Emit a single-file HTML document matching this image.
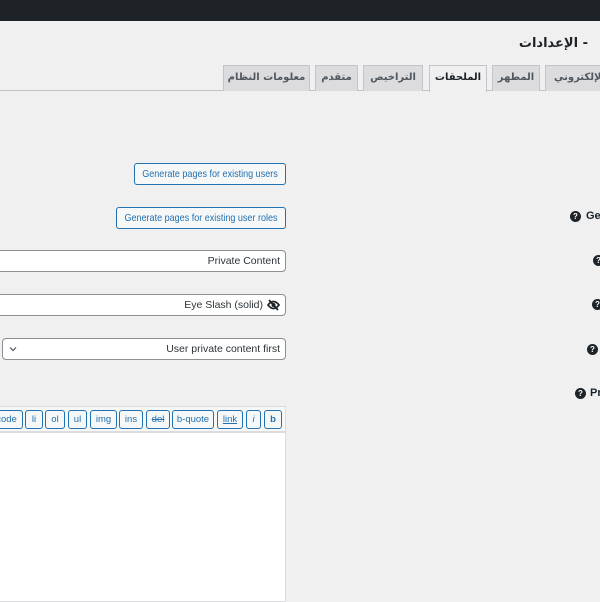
<!DOCTYPE html>
<html><head><meta charset="utf-8"><style>
*{box-sizing:border-box;margin:0;padding:0}
body{width:600px;height:600px;overflow:hidden;background:#f0f0f1;position:relative;font-family:"Liberation Sans","Noto Sans CJK SC",sans-serif;color:#1d2327;font-size:11px}
.a{position:absolute;white-space:nowrap}
.top{left:0;top:0;width:600px;height:21px;background:#1d2327}
.title{right:12px;top:36px;font-size:13px;font-weight:bold;color:#1d2327;direction:rtl;font-family:"DejaVu Sans",sans-serif}
.tab{top:65px;height:26px;border:1px solid #c3c4c7;border-bottom:none;background:#dcdcde;font-weight:bold;font-size:10px;color:#50575e;text-align:center;line-height:24px;font-family:"DejaVu Sans",sans-serif;direction:rtl;overflow:hidden}
.tab.on{background:#f0f0f1;color:#1d2327;height:27px}
.line{left:0;top:90px;width:600px;height:1px;background:#c3c4c7}
.btn{height:22px;border:1px solid #2271b1;border-radius:3px;background:#f6f7f7;color:#2271b1;font-size:10.5px;line-height:20px;overflow:hidden}
.btn span{display:block;width:240px;margin-left:calc(50% - 120px);text-align:center;transform:scaleX(0.86)}
.inp{height:22px;border:1px solid #8c8f94;border-radius:4px;background:#fff;color:#2c3338;font-size:10.5px;line-height:20px;text-align:right;padding-right:5px}
.q{width:11px;height:11px;border-radius:50%;background:#1d2327;color:#fff;font-size:8px;font-weight:bold;text-align:center;line-height:11px}
.lab{font-weight:bold;font-size:11px;color:#1d2327}
.tb{top:410px;height:19px;border:1px solid #2271b1;border-radius:3px;background:#f6f7f7;color:#2271b1;font-size:9.5px;line-height:17px;text-align:center}
</style></head><body>
<div class="a top"></div>
<div class="a title">- الإعدادات</div>
<div class="a line"></div>
<div class="a tab" style="left:223px;width:87px">معلومات النظام</div>
<div class="a tab" style="left:315px;width:43px">متقدم</div>
<div class="a tab" style="left:363px;width:60px">التراخيص</div>
<div class="a tab on" style="left:429px;width:58px">الملحقات</div>
<div class="a tab" style="left:492px;width:48px">المطهر</div>
<div class="a tab" style="left:545px;width:70px;text-align:left;padding-left:8px">الإلكتروني</div>

<div class="a btn" style="left:134px;top:163px;width:152px"><span>Generate pages for existing users</span></div>
<div class="a btn" style="left:116px;top:207px;width:170px"><span>Generate pages for existing user roles</span></div>
<div class="a inp" style="left:-5px;top:250px;width:291px">Private Content</div>
<div class="a inp" style="left:-5px;top:294px;width:291px;padding-right:22px">Eye Slash (solid)</div>
<svg class="a" style="left:267px;top:299px" width="13" height="12" viewBox="0 0 13 12"><path d="M1 6Q6.5 -1 12 6Q6.5 13 1 6Z" fill="none" stroke="#1d2327" stroke-width="1.8"/><circle cx="6.5" cy="6" r="2" fill="#1d2327"/><path d="M2 1L11 11" stroke="#1d2327" stroke-width="1.8"/></svg>
<div class="a inp" style="left:2px;top:338px;width:284px">User private content first</div>
<svg class="a" style="left:9px;top:346px" width="8" height="6" viewBox="0 0 8 6"><path d="M1 1.5L4 4.5L7 1.5" fill="none" stroke="#50575e" stroke-width="1.2"/></svg>

<div class="a q" style="left:570px;top:211px">?</div><div class="a lab" style="left:586px;top:210px">Ge</div>
<div class="a q" style="left:593px;top:255px">?</div>
<div class="a q" style="left:592px;top:299px">?</div>
<div class="a q" style="left:587px;top:344px">?</div>
<div class="a q" style="left:575px;top:388px">?</div><div class="a lab" style="left:590px;top:387px">Pr</div>

<div class="a" style="left:-2px;top:406px;width:288px;height:26px;background:#f6f7f7;border:1px solid #dcdcde"></div>
<div class="a" style="left:-2px;top:432px;width:288px;height:170px;background:#fff;border:1px solid #dcdcde"></div>
<div class="a tb" style="left:-10px;width:33px">code</div>
<div class="a tb" style="left:25px;width:18px">li</div>
<div class="a tb" style="left:45px;width:20px">ol</div>
<div class="a tb" style="left:68px;width:19px">ul</div>
<div class="a tb" style="left:90px;width:27px">img</div>
<div class="a tb" style="left:119px;width:24px">ins</div>
<div class="a tb" style="left:146px;width:24px;text-decoration:line-through">del</div>
<div class="a tb" style="left:172px;width:42px">b-quote</div>
<div class="a tb" style="left:217px;width:26px;text-decoration:underline">link</div>
<div class="a tb" style="left:246px;width:15px;font-style:italic">i</div>
<div class="a tb" style="left:264px;width:18px;font-weight:bold">b</div>
</body></html>
